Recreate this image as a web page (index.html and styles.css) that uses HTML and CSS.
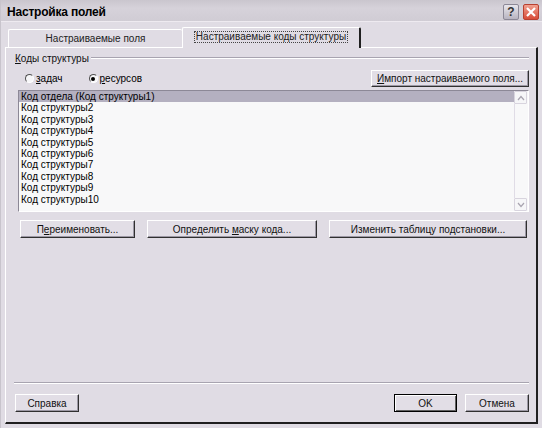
FILE: index.html
```html
<!DOCTYPE html>
<html lang="ru">
<head>
<meta charset="utf-8">
<title>Настройка полей</title>
<link rel="stylesheet" href="styles.css">
</head>
<body>
<div class="window">
  <div class="titlebar">
    <span class="title">Настройка полей</span>
    <div class="caption-buttons">
      <span class="cap-btn help">?</span>
      <span class="cap-btn close">
        <svg width="12" height="12" viewBox="0 0 12 12"><path d="M2 2 L10 10 M10 2 L2 10" stroke="#fff" stroke-width="2.2" fill="none"/></svg>
      </span>
    </div>
  </div>
  <div class="tabs">
    <div class="tab">Настраиваемые поля</div>
    <div class="tab active"><span class="focus">Настраиваемые коды структуры</span></div>
  </div>
  <div class="panel">
    <div class="group-header">
      <span class="group-label"><u>К</u>оды структуры</span>
      <span class="group-line"></span>
    </div>
    <div class="options">
      <label class="radio"><span class="circle"></span><span><u>з</u>адач</span></label>
      <label class="radio"><span class="circle checked"></span><span><u>р</u>есурсов</span></label>
      <span class="btn import"><span><u>И</u>мпорт настраиваемого поля...</span></span>
    </div>
    <div class="list">
      <div class="rows">
        <div class="row selected">Код отдела (Код структуры1)</div>
        <div class="row">Код структуры2</div>
        <div class="row">Код структуры3</div>
        <div class="row">Код структуры4</div>
        <div class="row">Код структуры5</div>
        <div class="row">Код структуры6</div>
        <div class="row">Код структуры7</div>
        <div class="row">Код структуры8</div>
        <div class="row">Код структуры9</div>
        <div class="row">Код структуры10</div>
      </div>
      <div class="scrollbar">
        <span class="sb-btn"><svg width="8" height="6" viewBox="0 0 8 6"><path d="M1 5 L4 1.5 L7 5" stroke="#a8a4b0" stroke-width="1.2" fill="none"/></svg></span>
        <span class="sb-track"></span>
        <span class="sb-btn"><svg width="8" height="6" viewBox="0 0 8 6"><path d="M1 1 L4 4.5 L7 1" stroke="#a8a4b0" stroke-width="1.2" fill="none"/></svg></span>
      </div>
    </div>
    <div class="actions">
      <span class="btn rename"><span>П<u>е</u>реименовать...</span></span>
      <span class="btn mask"><span>Определить <u>м</u>аску кода...</span></span>
      <span class="btn table"><span>Изменить таблицу подстановки...</span></span>
    </div>
    <div class="spacer"></div>
    <div class="separator"></div>
    <div class="footer">
      <span class="btn help-btn">Справка</span>
      <span class="footer-right">
        <span class="btn ok">OK</span>
        <span class="btn cancel">Отмена</span>
      </span>
    </div>
  </div>
</div>
</body>
</html>
```

FILE: styles.css
```css
* { box-sizing: border-box; }

html, body {
  margin: 0;
  padding: 0;
  background: #dedae2;
}

body {
  font-family: "Liberation Sans", Arial, sans-serif;
  font-size: 10px;
  color: #000;
}

.window {
  width: 542px;
  height: 428px;
  background: #e0dce4;
  border-left: 1px solid #c8c4cc;
  display: flex;
  flex-direction: column;
}

.titlebar {
  height: 22px;
  display: flex;
  align-items: center;
  justify-content: space-between;
  padding: 0 3px 0 6px;
  background: linear-gradient(#cac6ce, #d6d2da 40%, #d0ccd4);
  border-bottom: 1px solid #eeeaf0;
}

.title {
  font-weight: bold;
  font-size: 12px;
  letter-spacing: -0.2px;
  margin-top: 3px;
}

.caption-buttons {
  display: flex;
  gap: 4px;
  margin-top: 2px;
}

.cap-btn {
  width: 16px;
  height: 16px;
  display: flex;
  align-items: center;
  justify-content: center;
  border-radius: 2px;
}

.cap-btn.help {
  background: linear-gradient(#e8e6ec, #b8b4c0);
  border: 1px solid #8c8896;
  color: #333;
  font-weight: bold;
  font-size: 12px;
}

.cap-btn.close {
  background: linear-gradient(#f0a090, #d84c38);
  border: 1px solid #b84030;
}

.tabs {
  height: 25px;
  display: flex;
  align-items: flex-end;
  padding-left: 7px;
}

.tab {
  height: 18px;
  width: 174px;
  display: flex;
  align-items: center;
  justify-content: center;
  border-top: 1px solid #fff;
  border-left: 1px solid #fff;
  border-radius: 2px 2px 0 0;
  color: #222;
}

.tab.active {
  height: 21px;
  width: 179px;
  border-right: 2px solid #202020;
  position: relative;
  top: 1px;
  background: #e0dce4;
  z-index: 1;
  padding-bottom: 2px;
}

.focus {
  outline: 1px dotted #444;
  padding: 0 1px;
  line-height: 10px;
}

.panel {
  flex: 1;
  margin: 0 4px 4px 4px;
  border-top: 1px solid #fff;
  border-left: 1px solid #fff;
  border-right: 2px solid #202020;
  border-bottom: 2px solid #202020;
  display: flex;
  flex-direction: column;
  padding: 4px 7px 10px 8px;
}

.group-header {
  display: flex;
  align-items: center;
  padding-left: 1px;
  height: 12px;
}

.group-label {
  color: #111;
  padding-right: 2px;
}

.group-line {
  flex: 1;
  height: 2px;
  border-top: 1px solid #a8a4b0;
  border-bottom: 1px solid #fff;
}

.options {
  display: flex;
  align-items: center;
  height: 17px;
  margin-top: 6px;
  padding-left: 11px;
}

.radio {
  display: flex;
  align-items: center;
  gap: 2px;
  margin-right: 26px;
}

.circle {
  width: 9px;
  height: 9px;
  border-radius: 50%;
  border: 1px solid #505050;
  border-right-color: #fff;
  border-bottom-color: #fff;
  background: #f6f6f8;
  position: relative;
}

.circle.checked::after {
  content: "";
  position: absolute;
  left: 1.5px;
  top: 1.5px;
  width: 4px;
  height: 4px;
  border-radius: 50%;
  background: #000;
}

.btn {
  display: inline-flex;
  align-items: center;
  justify-content: center;
  height: 17px;
  background: #e2dee6;
  border: 1px solid;
  border-color: #fff #303030 #303030 #fff;
  box-shadow: inset -1px -1px 0 #9c98a4;
  color: #111;
  white-space: nowrap;
}

.btn.import {
  margin-left: auto;
  width: 158px;
}

.list {
  margin-top: 3px;
  margin-left: 4px;
  height: 122px;
  border: 1px solid;
  border-color: #8c8896 #fff #fff #8c8896;
  background: #f8f8f9;
  display: flex;
}

.rows {
  flex: 1;
}

.row {
  height: 11.4px;
  line-height: 11px;
  padding-left: 2px;
  white-space: nowrap;
}

.row.selected {
  background: #b4b0c0;
}

.scrollbar {
  width: 13px;
  display: flex;
  flex-direction: column;
  margin-right: 1px;
}

.sb-btn {
  height: 13px;
  display: flex;
  align-items: center;
  justify-content: center;
  border: 1px solid #d8d4de;
  border-radius: 1px;
  background: #f6f6f8;
}

.sb-track {
  flex: 1;
  border-left: 1px solid #e0dce6;
}

.actions {
  display: flex;
  gap: 12px;
  margin-top: 8px;
  padding-left: 6px;
}

.btn.rename { width: 115px; height: 18px; }
.btn.mask { width: 170px; height: 18px; }
.btn.table { width: 198px; height: 18px; }

.spacer { flex: 1; }

.separator {
  height: 2px;
  border-top: 1px solid #a8a4b0;
  border-bottom: 1px solid #fff;
  margin: 0 0 10px 0;
}

.footer {
  display: flex;
  align-items: center;
  justify-content: space-between;
  padding-left: 1px;
}

.footer-right {
  display: flex;
  gap: 8px;
}

.btn.help-btn { width: 64px; height: 18px; }
.btn.ok {
  width: 63px;
  height: 18px;
  border: 1px solid #000;
  box-shadow: inset 1px 1px 0 #fff, inset -1px -1px 0 #606060;
}
.btn.cancel { width: 64px; height: 18px; }
```
